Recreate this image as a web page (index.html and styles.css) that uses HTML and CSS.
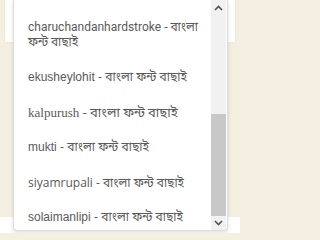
FILE: index.html
```html
<!DOCTYPE html>
<html lang="bn">
<head>
<meta charset="utf-8">
<link rel="stylesheet" href="styles.css">
</head>
<body>
<div class="page">
  <div class="card"></div>
  <div class="spacer"></div>
  <div class="footer"></div>
</div>
<div class="dropdown">
  <ul class="options">
    <li class="opt f-charu">charuchandanhardstroke - বাংলা ফন্ট বাছাই</li>
    <li class="opt f-ekushey">ekusheylohit - বাংলা ফন্ট বাছাই</li>
    <li class="opt f-kalpurush">kalpurush - বাংলা ফন্ট বাছাই</li>
    <li class="opt f-mukti">mukti - বাংলা ফন্ট বাছাই</li>
    <li class="opt f-siyam">siyamrupali - বাংলা ফন্ট বাছাই</li>
    <li class="opt f-solaiman">solaimanlipi - বাংলা ফন্ট বাছাই</li>
  </ul>
  <div class="scrollbar">
    <div class="arrow up"><svg width="9" height="6" viewBox="0 0 9 6"><path d="M1 5 L4.5 1.5 L8 5" fill="none" stroke="#505050" stroke-width="1.6"/></svg></div>
    <div class="track"><div class="thumb"></div></div>
    <div class="arrow down"><svg width="9" height="6" viewBox="0 0 9 6"><path d="M1 1 L4.5 4.5 L8 1" fill="none" stroke="#505050" stroke-width="1.6"/></svg></div>
  </div>
</div>
</body>
</html>
```
FILE: styles.css
```css
html, body {
  margin: 0;
  padding: 0;
}
body {
  width: 240px;
  height: 233px;
  overflow: hidden;
  background: #f5efe1;
  position: relative;
  font-family: "Liberation Sans", "Noto Sans Bengali", "Lohit Bengali", sans-serif;
}
.page {
  display: flex;
  flex-direction: column;
  height: 233px;
}
.card {
  margin: 0 5px;
  height: 42px;
  background: #ffffff;
  box-shadow: 0 0 2px rgba(0,0,0,0.08);
}
.spacer {
  flex: 1;
}
.footer {
  height: 16px;
  background: #ffffff;
}
.dropdown {
  position: absolute;
  left: 13px;
  top: -1px;
  width: 213px;
  height: 230px;
  background: #ffffff;
  border: 1px solid #dcdcdc;
  border-radius: 0 0 4px 4px;
  box-shadow: 0 2px 4px rgba(0,0,0,0.12);
  display: flex;
  overflow: hidden;
}
.options {
  list-style: none;
  margin: 0;
  padding: 10px 0 0 0;
  flex: 1;
  min-width: 0;
}
.opt {
  padding: 10px 8px 10px 14px;
  line-height: 15px;
  font-size: 12px;
  color: #5a5a5a;
}
.f-charu { font-family: Roboto, "Noto Sans Bengali", sans-serif; }
.f-ekushey { font-family: "Liberation Sans", "Noto Sans Bengali", sans-serif; }
.f-kalpurush { font-family: "Liberation Serif", "Noto Sans Bengali", serif; font-size: 13px; }
.f-mukti { font-family: "Liberation Sans", "Noto Sans Bengali", sans-serif; }
.f-siyam { font-family: "Open Sans", "Noto Sans Bengali", sans-serif; }
.f-solaiman { font-family: "Liberation Sans", "Noto Sans Bengali", sans-serif; }
.scrollbar {
  width: 15px;
  margin-right: 1px;
  background: #f1f1f1;
  display: flex;
  flex-direction: column;
}
.arrow {
  height: 14px;
  display: flex;
  align-items: center;
  justify-content: center;
}
.arrow.up {
  height: 15px;
}
.track {
  flex: 1;
  display: flex;
  flex-direction: column;
  justify-content: flex-end;
}
.thumb {
  height: 102px;
  background: #c8c8c8;
}
```
